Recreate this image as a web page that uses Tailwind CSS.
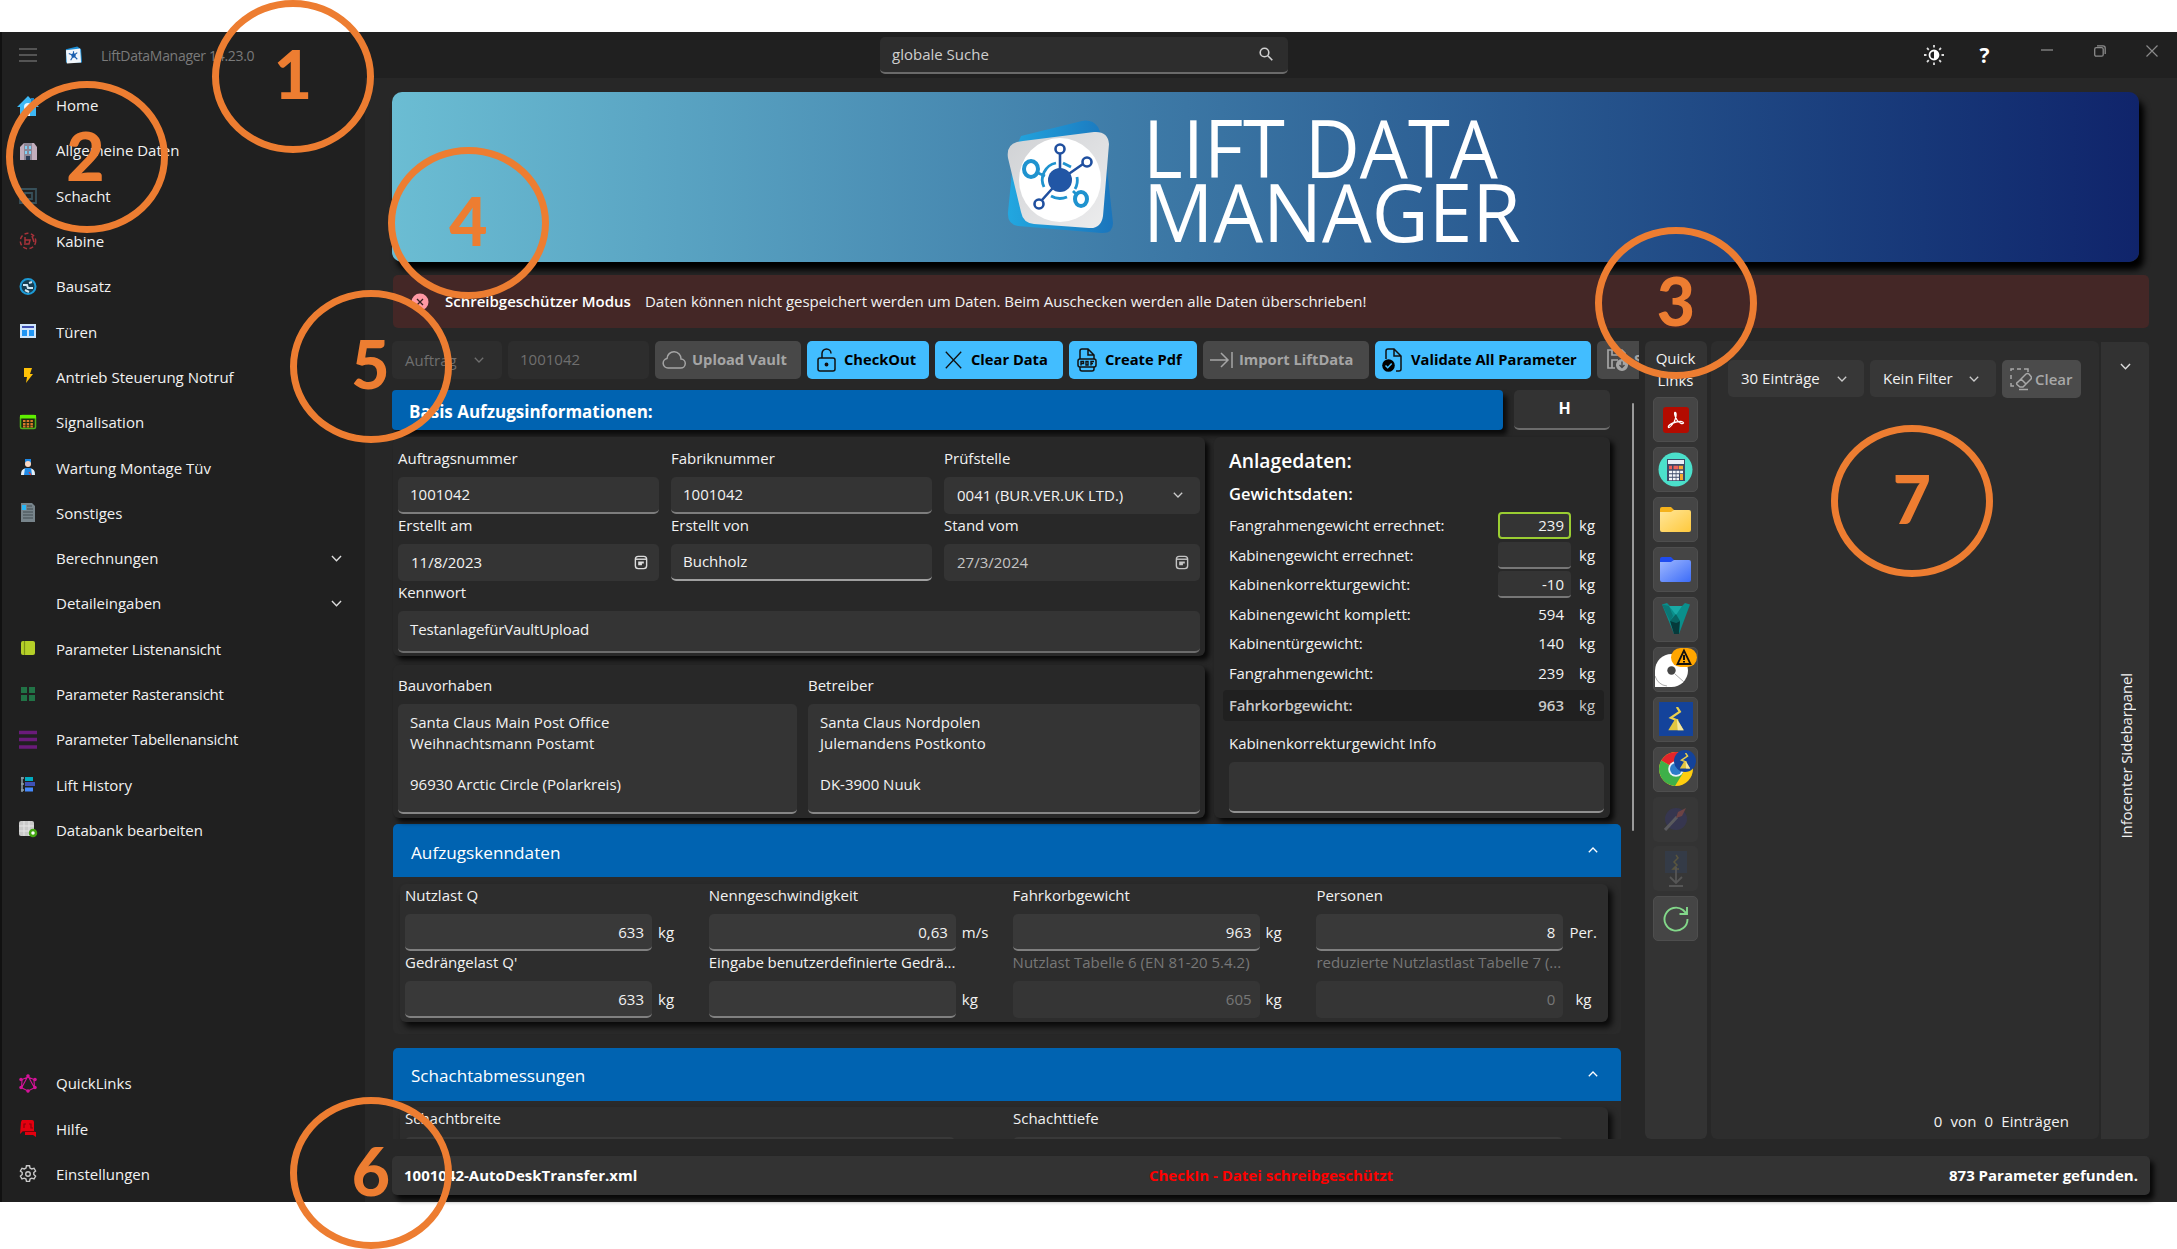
<!DOCTYPE html>
<html lang="de">
<head>
<meta charset="utf-8">
<title>LiftDataManager</title>
<script src="https://cdn.jsdelivr.net/npm/@tailwindcss/browser@4"></script>
</head>
<body class="relative h-[1249px] w-[2177px] overflow-hidden bg-white pt-[32px] font-['Open_Sans',sans-serif] text-[15px] leading-[21px] text-[#f2f2f2]">

<svg class="absolute h-0 w-0">
  <defs>
    <symbol id="down" viewBox="0 0 12 12"><path d="M1.800 3.800 6 8l4.200-4.200" fill="none" stroke="currentColor" stroke-width="1.300"/></symbol>
    <symbol id="up" viewBox="0 0 12 12"><path d="M1.800 8.200 6 4l4.200 4.200" fill="none" stroke="currentColor" stroke-width="1.300"/></symbol>
    <symbol id="cal" viewBox="0 0 14 16"><rect x="1" y="1.500" width="12" height="13" rx="3" fill="none" stroke="currentColor" stroke-width="1.500"/><path d="M1 4.500h12" stroke="currentColor" stroke-width="1.500"/><path d="M4 7h6v2H8v2H4z" fill="currentColor"/></symbol>
    <symbol id="mast" viewBox="0 0 20 28"><path d="M11 0l3.500 5.500L4 12.500l8.500 3.500" fill="none" stroke="#e9cf4e" stroke-width="2.600"/><path d="M9 14h2.500L19 27H1z" fill="#e3c640"/><path d="M11 14l8 13h-7z" fill="#f6e8a0"/></symbol>
    <linearGradient id="fy" x1="0" y1="0" x2="1" y2="1"><stop stop-color="#ffe69a"/><stop offset="1" stop-color="#ffc93c"/></linearGradient>
    <linearGradient id="fb" x1="0" y1="0" x2="1" y2="1"><stop stop-color="#9fb8ff"/><stop offset="1" stop-color="#3c6cf8"/></linearGradient>
    <linearGradient id="lb" x1="0" y1="0" x2="1" y2="0"><stop stop-color="#22a7e0"/><stop offset="1" stop-color="#1b75bc"/></linearGradient>
    <linearGradient id="lw" x1="0" y1="0" x2="1" y2="1"><stop stop-color="#cfd1d4"/><stop offset="1" stop-color="#ededee"/></linearGradient>
  </defs>
</svg>

<div class="flex h-[1170px] flex-col border-l-2 border-[#111] bg-[#202020]">
  <!-- Title bar -->
  <header class="flex h-[46px] shrink-0 items-center">
    <svg class="ml-[17px] h-[16px] w-[18px]" viewBox="0 0 18 16"><path d="M0 2h18M0 8h18M0 14h18" stroke="#666" stroke-width="1.500"/></svg>
    <svg class="ml-[28px] h-[18px] w-[17px]" viewBox="0 0 18 18"><path d="M1 3 13 0l4 3 1 14H1z" fill="#1f8fd6"/><path d="M1 4 16 2l1 15-15 1z" fill="#f2f6fa"/><g stroke="#1c5fae" stroke-width="1.200"><path d="M9 9.500V5M9 9.500l4-3M9 9.500 4 7.500M9 9.500l-3 5M9 9.500l4 4"/></g><circle cx="9" cy="9.500" r="2.300" fill="#1c5fae"/></svg>
    <span class="ml-[19px] w-[151px] whitespace-nowrap text-[14px] tracking-[-0.300px] text-[#7a7a7a]">LiftDataManager 14.23.0</span>
    <div class="ml-[628px] flex h-[37px] w-[408px] items-center justify-between rounded-[5px] border-b-2 border-[#6a6a6a] bg-[#2d2d2d] pr-[15px] pl-[12px] text-[#cfcfcf]">
      <span>globale Suche</span>
      <svg class="h-[14px] w-[14px]" viewBox="0 0 14 14" fill="none" stroke="#d0d0d0" stroke-width="1.600"><circle cx="5.500" cy="5.500" r="4.300"/><path d="m8.800 8.800 4.500 4.500"/></svg>
    </div>
    <svg class="ml-[636px] h-[20px] w-[20px]" viewBox="0 0 20 20"><circle cx="10" cy="10" r="4.500" fill="none" stroke="#fff" stroke-width="1.800"/><path d="M10 5.500a4.500 4.500 0 0 1 0 9z" fill="#fff"/><path d="M10 0v2.500M10 17.500V20M0 10h2.500M17.500 10H20M3 3l1.800 1.800M15.200 15.200 17 17M3 17l1.800-1.800M15.200 4.800 17 3" stroke="#ddd" stroke-width="1.800"/></svg>
    <span class="ml-[32px] w-[17px] text-center text-[21px] font-bold text-white">?</span>
    <svg class="mb-[11px] ml-[48px] h-[12px] w-[12px]" viewBox="0 0 12 12"><path d="M0 6h12" stroke="#8a8a8a" stroke-width="1.300"/></svg>
    <svg class="mb-[9px] ml-[41px] h-[12px] w-[12px]" viewBox="0 0 12 12" fill="none" stroke="#8a8a8a" stroke-width="1.300"><rect x="0.700" y="2.700" width="8.500" height="8.500" rx="1.500"/><path d="M3 .8h6a2.200 2.200 0 0 1 2.200 2.200v6"/></svg>
    <svg class="mb-[9px] ml-[40px] h-[12px] w-[12px]" viewBox="0 0 12 12"><path d="m.5.5 11 11m0-11-11 11" stroke="#8a8a8a" stroke-width="1.200"/></svg>
  </header>

  <div class="flex min-h-0 flex-1">
    <!-- Navigation -->
    <nav class="flex w-[363px] shrink-0 flex-col pt-[5px] pl-[15px] text-[15px]">
      <div class="flex h-[45.300px] items-center gap-[17px]"><svg class="h-[22px] w-[22px]" viewBox="0 0 22 22"><path d="M11 1 0 12h3v9h16v-9h3z" fill="#3db8f5"/><path d="M14 3h3v4h-3z" fill="#1c84c6"/><circle cx="11" cy="12" r="4" fill="#e8f6ff"/><path d="M9 17h4v4H9z" fill="#e8f6ff"/></svg><span>Home</span></div>
      <div class="flex h-[45.300px] items-center gap-[17px]"><svg class="h-[22px] w-[22px]" viewBox="0 0 22 22"><path d="M3 7 7 3h10l3 4v13H3z" fill="#c3aebd"/><path d="M7 3h8v17H7z" fill="#8d8797"/><path d="M8 6h2v3H8zm4 0h2v3h-2zm-4 5h2v3H8zm4 0h2v3h-2z" fill="#7fd0f5"/><path d="M9 16h4v4H9z" fill="#2b3b55"/></svg><span>Allgemeine Daten</span></div>
      <div class="flex h-[45.300px] items-center gap-[17px]"><svg class="h-[22px] w-[22px]" viewBox="0 0 22 22" fill="none" stroke="#37505a" stroke-width="1.800"><path d="M3 8V4h16v14H3v-4M8 8h7v6H8zM3 11h5"/></svg><span>Schacht</span></div>
      <div class="flex h-[45.300px] items-center gap-[17px]"><svg class="h-[22px] w-[22px]" viewBox="0 0 22 22" fill="none" stroke="#a8323a" stroke-width="1.500"><circle cx="11" cy="10" r="7.700" stroke-dasharray="4 2.500"/><path d="M8 6v8M8 9h5l-1 4H9M15 5l2 6"/></svg><span>Kabine</span></div>
      <div class="flex h-[45.300px] items-center gap-[17px]"><svg class="h-[22px] w-[22px]" viewBox="0 0 22 22"><circle cx="11" cy="10.500" r="7.500" fill="#173e52" stroke="#1c9ad6" stroke-width="2"/><path d="M6 9h4l1 3h5M12 7l3-1M8 14l4 2" stroke="#cfe6f2" stroke-width="2" fill="none"/></svg><span>Bausatz</span></div>
      <div class="flex h-[45.300px] items-center gap-[17px]"><svg class="h-[22px] w-[22px]" viewBox="0 0 22 22"><path d="M3 3h16v14H3z" fill="#cfe6fb"/><path d="M5 5h12v2H5z" fill="#3f51b5"/><path d="M5 9h5v6H5zm7 0h5v6h-5z" fill="#2196f3"/></svg><span>Türen</span></div>
      <div class="flex h-[45.300px] items-center gap-[17px]"><svg class="h-[22px] w-[22px]" viewBox="0 0 22 22"><path d="M7 2h8l-2 6h3L9 17l1-6H7z" fill="#ffc107"/></svg><span>Antrieb Steuerung Notruf</span></div>
      <div class="flex h-[45.300px] items-center gap-[17px]"><svg class="h-[22px] w-[22px]" viewBox="0 0 22 22"><rect x="3.500" y="3.500" width="15" height="13" rx="1.500" fill="#1f2a10" stroke="#4faf1b" stroke-width="1.500"/><path d="M3 3h16v3.500H3z" fill="#5ff000"/><path d="M6 9h10M6 12h10M6 14.500h10" stroke="#d9782a" stroke-width="1.800" stroke-dasharray="2.500 1.200"/></svg><span>Signalisation</span></div>
      <div class="flex h-[45.300px] items-center gap-[17px]"><svg class="h-[22px] w-[22px]" viewBox="0 0 22 22"><path d="M8 2h6v4H8z" fill="#1e88e5"/><circle cx="11" cy="7" r="3" fill="#fbd9c4"/><path d="M4 18c0-5 2-7 7-7s7 2 7 7z" fill="#e3eef7"/><path d="M8 11h6l1 7H7z" fill="#1e88e5"/><path d="m12 15 2 3" stroke="#e53935" stroke-width="1.200"/></svg><span>Wartung Montage Tüv</span></div>
      <div class="flex h-[45.300px] items-center gap-[17px]"><svg class="h-[22px] w-[22px]" viewBox="0 0 22 22"><path d="M4 1h11l3 3v16H4z" fill="#77848b"/><path d="M5 3h4v5H5z" fill="#29b6f6"/><path d="M10 4h5M10 7h6M6 10h10M6 13h10M6 16h10" stroke="#424c52" stroke-width="1.200"/></svg><span>Sonstiges</span></div>
      <div class="flex h-[45.300px] items-center pr-[22px] pl-[39px]"><span class="flex-1">Berechnungen</span><svg class="h-[13px] w-[13px] text-[#ddd]"><use href="#down"/></svg></div>
      <div class="flex h-[45.300px] items-center pr-[22px] pl-[39px]"><span class="flex-1">Detaileingaben</span><svg class="h-[13px] w-[13px] text-[#ddd]"><use href="#down"/></svg></div>
      <div class="flex h-[45.300px] items-center gap-[17px]"><svg class="h-[22px] w-[22px]" viewBox="0 0 22 22"><rect x="4" y="3" width="14" height="14" rx="2" fill="#b5cf28"/><path d="M7.500 3v14" stroke="#7d9316" stroke-width="1.200"/></svg><span class="tracking-[-0.220px]">Parameter Listenansicht</span></div>
      <div class="flex h-[45.300px] items-center gap-[17px]"><svg class="h-[22px] w-[22px]" viewBox="0 0 22 22"><path d="M4 3h6v6H4zm8 0h6v6h-6zM4 11h6v6H4zm8 0h6v6h-6z" fill="#217346"/></svg><span class="tracking-[-0.220px]">Parameter Rasteransicht</span></div>
      <div class="flex h-[45.300px] items-center gap-[17px]"><svg class="h-[22px] w-[22px]" viewBox="0 0 22 22"><path d="M2 3.500h18M2 10.500h18M2 18h18" stroke="#6a1b7a" stroke-width="3.500"/></svg><span class="tracking-[-0.220px]">Parameter Tabellenansicht</span></div>
      <div class="flex h-[45.300px] items-center gap-[17px]"><svg class="h-[22px] w-[22px]" viewBox="0 0 22 22"><path d="M5 3v15M4 4h3M4 10h3M4 16h3" stroke="#8da0aa" stroke-width="1.500" fill="none"/><path d="M8 3h8v4H8z" fill="#00acc1"/><path d="M8 8h10v4H8z" fill="#3f51b5"/><path d="M8 13.500h8v4H8z" fill="#448aff"/></svg><span>Lift History</span></div>
      <div class="flex h-[45.300px] items-center gap-[17px]"><svg class="h-[22px] w-[22px]" viewBox="0 0 22 22"><rect x="2" y="2" width="15" height="15" rx="2" fill="#c9c9c9"/><path d="M2 7h15M2 12h15M7 2v15M12 2v15" stroke="#e6e6e6"/><circle cx="16" cy="14" r="3" fill="#fff" stroke="#43a512" stroke-width="2.500"/></svg><span class="tracking-[-0.050px]">Databank bearbeiten</span></div>
      <div class="mt-auto flex h-[45.300px] items-center gap-[17px]"><svg class="h-[22px] w-[22px]" viewBox="0 0 22 22" fill="none" stroke="#d6139a" stroke-width="1.100"><path d="M11 3 5 14M11 3l6 11M5 7l-.5 8M17 7l.5 8M5 6.500 11 4l6 2.500M5 15l6 3 6-3"/><g fill="#d6139a"><circle cx="11" cy="3" r="1.200"/><circle cx="4" cy="6.500" r="1.200"/><circle cx="18" cy="6.500" r="1.200"/><circle cx="4" cy="14.500" r="1.200"/><circle cx="18" cy="14.500" r="1.200"/><circle cx="11" cy="18" r="1.200"/></g></svg><span>QuickLinks</span></div>
      <div class="flex h-[45.300px] items-center gap-[17px]"><svg class="h-[22px] w-[22px]" viewBox="0 0 22 22"><path d="M5 2h10q2 0 2 2v9H6l-3 3 1-12z" fill="#e3000f"/><path d="M8 14h11v5l-3-2H8z" fill="#e3000f"/><path d="M7 10V6h2M12 6h2v4h2" stroke="#8c000a" stroke-width="1.200" fill="none"/><path d="M6 13.500h12" stroke="#7c0008"/></svg><span>Hilfe</span></div>
      <div class="mb-[5px] flex h-[45.300px] items-center gap-[17px]"><svg class="h-[22px] w-[22px]" viewBox="0 0 24 24" fill="none" stroke="#c8c8c8" stroke-width="1.500"><circle cx="12" cy="12" r="2.500"/><path d="M9.800 5.500 10.300 3h3.400l.5 2.500 1.800 1 2.600-.8 1.700 3-2 1.700v2.200l2 1.700-1.700 3-2.600-.8-1.800 1-.5 2.500h-3.400l-.5-2.500-1.800-1-2.600.8-1.700-3 2-1.700v-2.200l-2-1.700 1.700-3 2.600.8z"/></svg><span>Einstellungen</span></div>
    </nav>

    <!-- Page -->
    <main class="flex min-w-0 flex-1 flex-col bg-[#272727] pt-[14px] pl-[27px]">
      <div class="flex h-[170px] w-[1747px] shrink-0 items-start rounded-[10px] bg-linear-to-r from-[#6bbdd3] to-[#10246b] shadow-[5px_8px_6px_#000]">
        <svg class="mt-[28px] ml-[614px] h-[114px] w-[108px]" viewBox="0 0 108 114">
          <path d="M15 16 76 1q10-2 16 6l6 14 9 82q0 11-12 10L12 106Q1 104 2 92l6-60z" fill="url(#lb)"/>
          <path d="M17 21 88 12q14-1 15 12L97 96q-2 13-14 12L28 104q-11-1-13-12L2 38q-2-13 9-16z" fill="url(#lw)"/>
          <ellipse cx="54" cy="60" rx="41" ry="42" fill="#fff"/>
          <g fill="none" stroke="#1f93cf" stroke-width="2.800"><path d="M50 43a17 17 0 0 0-12 24M57 43l8 4M71 57a17 17 0 0 1-2 12M61 77a18 18 0 0 1-16-1M32 53l7 3M67 71l4 4"/><ellipse cx="25" cy="49" rx="7" ry="8" stroke-width="4"/><ellipse cx="75" cy="79" rx="6" ry="7" stroke-width="4"/></g>
          <g fill="none" stroke="#1f4f9f" stroke-width="2.600"><path d="M54 60V34M54 60l23-16M54 60 36 80"/><circle cx="54" cy="29" r="4.500"/><circle cx="81" cy="42" r="4.500"/><circle cx="33" cy="84" r="4.500"/></g>
          <circle cx="54" cy="60" r="12" fill="#2156a5"/>
        </svg>
        <div class="mt-[23px] ml-[29px] text-[80px] leading-[63.500px] whitespace-nowrap text-white"><div class="origin-left scale-x-[0.95]">LIFT DATA</div><div class="origin-left scale-x-[0.98]">MANAGER</div></div>
      </div>

      <div class="mt-[13px] ml-px flex h-[53px] w-[1756px] shrink-0 items-center rounded-[5px] bg-[#442726]">
        <svg class="ml-[18px] h-[18px] w-[18px]" viewBox="0 0 18 18"><circle cx="9" cy="9" r="8.500" fill="#ff99a4"/><path d="m6 6 6 6m0-6-6 6" stroke="#33201f" stroke-width="1.300"/></svg>
        <span class="ml-[16px] w-[200px] font-semibold whitespace-nowrap text-white">Schreibgeschützer Modus</span>
        <span class="tracking-[-0.030px] whitespace-nowrap">Daten können nicht gespeichert werden um Daten. Beim Auschecken werden alle Daten überschrieben!</span>
      </div>

      <div class="mt-[13px] flex h-[798px] shrink-0">
        <!-- Form column -->
        <section class="w-[1247px] shrink-0 overflow-hidden">
          <div class="flex h-[38px] w-[1400px] gap-[6px] text-[14.700px] font-bold">
            <div class="flex w-[110px] shrink-0 items-center justify-between rounded-[5px] bg-[#2d2d2d] pr-[17px] pl-[13px] text-[15px] font-normal text-[#6f6f6f]"><span>Auftrag</span><svg class="h-[12px] w-[12px]"><use href="#down"/></svg></div>
            <div class="flex w-[141px] shrink-0 items-center rounded-[5px] bg-[#2d2d2d] pb-px pl-[12px] text-[15px] font-normal text-[#6f6f6f]">1001042</div>
            <div class="flex w-[146px] shrink-0 items-center gap-[6px] rounded-[5px] bg-[#484848] pb-px pl-[7px] whitespace-nowrap text-[#a5a5a5]"><svg class="h-[20px] w-[24px]" viewBox="0 0 24 20"><path d="M6 18h12.500a4.500 4.500 0 0 0 .5-9 7 7 0 0 0-14-.5A4.800 4.800 0 0 0 6 18z" fill="none" stroke="#a5a5a5" stroke-width="1.500"/></svg>Upload Vault</div>
            <div class="flex w-[122px] shrink-0 items-center gap-[8px] rounded-[5px] bg-[#42bdff] pb-px pl-[10px] whitespace-nowrap text-black"><svg class="h-[24px] w-[19px]" viewBox="0 0 19 24" fill="none" stroke="#111" stroke-width="1.500"><rect x="1" y="10" width="17" height="13" rx="2"/><path d="M5 10V5.500a4.500 4.500 0 0 1 9 0"/><circle cx="9.500" cy="16.500" r="1.200" fill="#111"/></svg>CheckOut</div>
            <div class="flex w-[128px] shrink-0 items-center gap-[9px] rounded-[5px] bg-[#42bdff] pb-px pl-[10px] whitespace-nowrap text-black"><svg class="h-[18px] w-[17px]" viewBox="0 0 17 18"><path d="m.8.800 15.400 16.400m0-16.400L.8 17.200" stroke="#111" stroke-width="1.300"/></svg>Clear Data</div>
            <div class="flex w-[128px] shrink-0 items-center gap-[8px] rounded-[5px] bg-[#42bdff] pb-px pl-[8px] whitespace-nowrap text-black"><svg class="h-[24px] w-[20px]" viewBox="0 0 20 24" fill="none" stroke="#111" stroke-width="1.500"><path d="M3 11V3q0-2 2-2h6l6 6v4M11 1v6h6M3 19v2q0 2 2 2h10q2 0 2-2v-2"/><rect x="1" y="11" width="18" height="8" rx="2"/><path d="M4 17.500v-4h2.500v2H4M9 13.500v3.500h2v-3.500zM14 17.500v-4h3M14 15.500h2" stroke-width="1.400"/></svg>Create Pdf</div>
            <div class="flex w-[166px] shrink-0 items-center gap-[6px] rounded-[5px] bg-[#484848] pb-px pl-[7px] whitespace-nowrap text-[#a5a5a5]"><svg class="h-[18px] w-[23px]" viewBox="0 0 23 18" fill="none" stroke="#a5a5a5" stroke-width="1.500"><path d="M0 9h18M11 2l7 7-7 7M22 1v16"/></svg>Import LiftData</div>
            <div class="flex w-[216px] shrink-0 items-center gap-[9px] rounded-[5px] bg-[#42bdff] pb-px pl-[7px] whitespace-nowrap text-black"><svg class="h-[24px] w-[20px]" viewBox="0 0 20 24"><path d="M4 11V3q0-2 2-2h6l7 7v13q0 2-2 2h-3M12 1v7h7" fill="none" stroke="#111" stroke-width="1.500"/><circle cx="6.500" cy="17.500" r="6.300" fill="#000"/><path d="m3.500 17.500 2.200 2.200 4-4.200" fill="none" stroke="#42bdff" stroke-width="1.500"/></svg>Validate All Parameter</div>
            <div class="flex w-[90px] shrink-0 items-center gap-[6px] rounded-[5px] bg-[#484848] pb-px pl-[9px] whitespace-nowrap text-[#a5a5a5]"><svg class="h-[24px] w-[22px]" viewBox="0 0 22 24" fill="none" stroke="#a5a5a5" stroke-width="1.700"><path d="M9 20H2V2h14l3 3v5M6 2v5h8V2M6 20v-8h6"/><circle cx="16" cy="17" r="5.200" fill="#a5a5a5"/><path d="M16 13.500v6M13.500 17l2.500 2.500 2.500-2.500" stroke="#484848" stroke-width="1.400"/></svg>Save</div>
          </div>

          <div class="mt-[11px] flex">
            <div class="w-[1229px] shrink-0">
              <div class="flex gap-[11px]">
                <div class="flex h-[40px] w-[1111px] items-center rounded-[4px] bg-[#0063b1] pt-[3px] pl-[17px] text-[17px] font-bold text-white shadow-[4px_5px_5px_#000b]">Basis Aufzugsinformationen:</div>
                <div class="flex h-[40px] w-[96px] items-center justify-center rounded-[5px] border-b-2 border-[#6c6c6c] bg-[#333] pb-[2px] pl-[5px] text-[16px] font-bold text-white">H</div>
              </div>

              <div class="mt-[7px] flex gap-[9px] pl-px">
                <div class="w-[812px]">
                  <div class="h-[219px] rounded-[6px] bg-[#282828] px-[5px] pt-[9.500px] shadow-[4px_4px_5px_#000c]">
                    <div class="grid grid-cols-[261px_261px_256px] gap-x-[12px]">
                      <div><div class="mb-[6px] h-[24px] leading-[22px]">Auftragsnummer</div><div class="flex h-[37px] items-center rounded-[5px] border-b-2 border-[#7d7d7d] bg-[#343434] pl-[12px]">1001042</div></div>
                      <div><div class="mb-[6px] h-[24px] leading-[22px]">Fabriknummer</div><div class="flex h-[37px] items-center rounded-[5px] border-b-2 border-[#7d7d7d] bg-[#343434] pl-[12px]">1001042</div></div>
                      <div><div class="mb-[6px] h-[24px] leading-[22px]">Prüfstelle</div><div class="flex h-[37px] items-center justify-between rounded-[5px] bg-[#343434] pr-[16px] pl-[13px]"><span>0041 (BUR.VER.UK LTD.)</span><svg class="h-[12px] w-[12px] text-[#ccc]"><use href="#down"/></svg></div></div>
                      <div><div class="mb-[6px] h-[24px] leading-[22px]">Erstellt am</div><div class="flex h-[37px] items-center justify-between rounded-[5px] bg-[#343434] pr-[11px] pl-[13px]"><span>11/8/2023</span><svg class="h-[15px] w-[14px] text-[#ddd]"><use href="#cal"/></svg></div></div>
                      <div><div class="mb-[6px] h-[24px] leading-[22px]">Erstellt von</div><div class="flex h-[37px] items-center rounded-[5px] border-b-2 border-[#a0a0a0] bg-[#343434] pl-[12px]">Buchholz</div></div>
                      <div><div class="mb-[6px] h-[24px] leading-[22px]">Stand vom</div><div class="flex h-[37px] items-center justify-between rounded-[5px] bg-[#343434] pr-[11px] pl-[13px] text-[#c4c4c4]"><span>27/3/2024</span><svg class="h-[15px] w-[14px]"><use href="#cal"/></svg></div></div>
                      <div class="col-span-3"><div class="mb-[6px] h-[24px] leading-[22px]">Kennwort</div><div class="flex h-[42px] items-center rounded-[5px] border-b-2 border-[#6c6c6c] bg-[#343434] pb-[3px] pl-[12px] tracking-[-0.120px]">TestanlagefürVaultUpload</div></div>
                    </div>
                  </div>
                  <div class="mt-[9px] grid h-[153px] grid-cols-[399px_392px] gap-x-[11px] rounded-[6px] bg-[#282828] px-[5px] pt-[9px] shadow-[4px_4px_5px_#000c]">
                    <div><div class="mb-[6px] h-[24px] leading-[22px]">Bauvorhaben</div><div class="h-[110px] rounded-[5px] border-b-2 border-[#868686] bg-[#343434] pt-[8px] pl-[12px] leading-[20.800px]">Santa Claus Main Post Office<br>Weihnachtsmann Postamt<br><br>96930 Arctic Circle (Polarkreis)</div></div>
                    <div><div class="mb-[6px] h-[24px] leading-[22px]">Betreiber</div><div class="h-[110px] rounded-[5px] border-b-2 border-[#868686] bg-[#343434] pt-[8px] pl-[12px] leading-[20.800px]">Santa Claus Nordpolen<br>Julemandens Postkonto<br><br>DK-3900 Nuuk</div></div>
                  </div>
                </div>

                <div class="h-[381px] w-[396px] rounded-[6px] bg-[#282828] pt-[7px] pr-[6px] pl-[15px] shadow-[4px_4px_5px_#000c]">
                  <div class="h-[34px] text-[19.300px] leading-[34px] font-semibold text-white">Anlagedaten:</div>
                  <div class="h-[33px] text-[16.500px] leading-[31px] font-semibold text-white">Gewichtsdaten:</div>
                  <div class="flex h-[29.500px] items-center"><span class="w-[269px] tracking-[-0.120px]">Fangrahmengewicht errechnet:</span><span class="h-[27px] w-[73px] rounded-[4px] border-2 border-[#9acd32] bg-[#343434] pr-[5px] text-right leading-[23px]">239</span><span class="ml-[8px]">kg</span></div>
                  <div class="flex h-[29.500px] items-center"><span class="w-[269px] tracking-[-0.120px]">Kabinengewicht errechnet:</span><span class="h-[27px] w-[73px] rounded-[4px] border-b-2 border-[#777] bg-[#343434]"></span><span class="ml-[8px]">kg</span></div>
                  <div class="flex h-[29.500px] items-center"><span class="w-[269px]">Kabinenkorrekturgewicht:</span><span class="h-[27px] w-[73px] rounded-[4px] border-b-2 border-[#777] bg-[#343434] pr-[7px] text-right leading-[27px]">-10</span><span class="ml-[8px]">kg</span></div>
                  <div class="flex h-[29.500px] items-center"><span class="w-[269px]">Kabinengewicht komplett:</span><span class="w-[73px] pr-[7px] text-right">594</span><span class="ml-[8px]">kg</span></div>
                  <div class="flex h-[29.500px] items-center"><span class="w-[269px] tracking-[-0.120px]">Kabinentürgewicht:</span><span class="w-[73px] pr-[7px] text-right">140</span><span class="ml-[8px]">kg</span></div>
                  <div class="flex h-[29.500px] items-center"><span class="w-[269px] tracking-[-0.120px]">Fangrahmengewicht:</span><span class="w-[73px] pr-[7px] text-right">239</span><span class="ml-[8px]">kg</span></div>
                  <div class="mt-[2px] -ml-[6px] flex h-[31px] items-center rounded-[4px] bg-[#202020] pb-px pl-[6px] text-[#c9c9c9]"><span class="w-[269px] tracking-[-0.200px] font-semibold">Fahrkorbgewicht:</span><span class="w-[73px] pr-[7px] text-right font-semibold">963</span><span class="ml-[8px]">kg</span></div>
                  <div class="mt-[10px] h-[31px] leading-[24px] tracking-[-0.050px]">Kabinenkorrekturgewicht Info</div>
                  <div class="h-[51px] rounded-[5px] border-b-2 border-[#909090] bg-[#343434]"></div>
                </div>
              </div>

              <div class="mt-[6px] ml-px flex h-[53px] items-center justify-between rounded-t-[5px] bg-[#0063b1] pt-[3px] pr-[22px] pl-[18px] text-[17.200px] text-white"><span>Aufzugskenndaten</span><svg class="mb-[4px] h-[12px] w-[12px]"><use href="#up"/></svg></div>
              <div class="ml-px h-[157px] rounded-b-[5px] bg-[#2a2a2a] pt-[7px] pl-[7px]">
                <div class="grid h-[138px] w-[1208px] grid-cols-[303.800px_303.800px_303.800px_290px] content-start rounded-[6px] bg-[#2d2d2d] pl-[5px] shadow-[4px_5px_6px_#000c]">
                  <div><div class="mb-[6px] h-[24px] leading-[23px]">Nutzlast Q</div><div class="flex items-center"><span class="h-[37px] w-[247px] rounded-[5px] border-b-2 border-[#808080] bg-[#393939] pr-[8px] text-right leading-[36px]">633</span><span class="ml-[6px]">kg</span></div></div>
                  <div><div class="mb-[6px] h-[24px] leading-[23px]">Nenngeschwindigkeit</div><div class="flex items-center"><span class="h-[37px] w-[247px] rounded-[5px] border-b-2 border-[#808080] bg-[#393939] pr-[8px] text-right leading-[36px]">0,63</span><span class="ml-[6px]">m/s</span></div></div>
                  <div><div class="mb-[6px] h-[24px] leading-[23px]">Fahrkorbgewicht</div><div class="flex items-center"><span class="h-[37px] w-[247px] rounded-[5px] border-b-2 border-[#808080] bg-[#393939] pr-[8px] text-right leading-[36px]">963</span><span class="ml-[6px]">kg</span></div></div>
                  <div><div class="mb-[6px] h-[24px] leading-[23px]">Personen</div><div class="flex items-center"><span class="h-[37px] w-[247px] rounded-[5px] border-b-2 border-[#808080] bg-[#393939] pr-[8px] text-right leading-[36px]">8</span><span class="ml-[6px]">Per.</span></div></div>
                  <div><div class="mb-[6px] h-[24px] leading-[23px]">Gedrängelast Q'</div><div class="flex items-center"><span class="h-[37px] w-[247px] rounded-[5px] border-b-2 border-[#808080] bg-[#393939] pr-[8px] text-right leading-[36px]">633</span><span class="ml-[6px]">kg</span></div></div>
                  <div><div class="mb-[6px] h-[24px] leading-[23px] tracking-[-0.060px] whitespace-nowrap">Eingabe benutzerdefinierte Gedrä...</div><div class="flex items-center"><span class="h-[37px] w-[247px] rounded-[5px] border-b-2 border-[#808080] bg-[#393939]"></span><span class="ml-[6px]">kg</span></div></div>
                  <div><div class="mb-[6px] h-[24px] leading-[23px] whitespace-nowrap text-[#777]">Nutzlast Tabelle 6 (EN 81-20 5.4.2)</div><div class="flex items-center"><span class="h-[37px] w-[247px] rounded-[5px] bg-[#353535] pr-[8px] text-right leading-[36px] text-[#777]">605</span><span class="ml-[6px]">kg</span></div></div>
                  <div><div class="mb-[6px] h-[24px] leading-[23px] whitespace-nowrap text-[#777]">reduzierte Nutzlastlast Tabelle 7 (...</div><div class="flex items-center"><span class="h-[37px] w-[247px] rounded-[5px] bg-[#353535] pr-[8px] text-right leading-[36px] text-[#777]">0</span><span class="ml-[12px]">kg</span></div></div>
                </div>
              </div>

              <div class="mt-[14px] ml-px flex h-[53px] items-center justify-between rounded-t-[5px] bg-[#0063b1] pt-[2px] pr-[22px] pl-[18px] text-[17.100px] text-white"><span>Schachtabmessungen</span><svg class="mb-[4px] h-[12px] w-[12px]"><use href="#up"/></svg></div>
              <div class="ml-px h-[157px] bg-[#2a2a2a] pt-[6px] pl-[7px]">
                <div class="grid h-[138px] w-[1208px] grid-cols-[608px_590px] content-start rounded-[6px] bg-[#2d2d2d] pl-[5px] shadow-[4px_5px_6px_#000c]">
                  <div><div class="mb-[6px] h-[24px] leading-[23px]">Schachtbreite</div><div class="h-[37px] w-[550px] rounded-[5px] bg-[#393939]"></div></div>
                  <div><div class="mb-[6px] h-[24px] leading-[23px]">Schachttiefe</div><div class="h-[37px] w-[550px] rounded-[5px] bg-[#393939]"></div></div>
                </div>
              </div>
            </div>
            <div class="mt-[13px] ml-[11px] h-[428px] w-[2px] rounded-full bg-[#9a9a9a]"></div>
          </div>
        </section>

        <!-- Quick links -->
        <aside class="ml-[5.500px] flex w-[62px] shrink-0 flex-col items-center gap-[4.900px] rounded-[6px] bg-[#333] pt-[6px]">
          <div class="h-[45.500px] text-center leading-[22px]">Quick<br>Links</div>
          <div class="flex h-[45px] w-[45px] items-center justify-center rounded-[5px] border border-[#4e4e4e] bg-[#454545]"><svg class="h-[26px] w-[26px]" viewBox="0 0 26 26"><rect width="26" height="26" rx="3" fill="#b30b00"/><path d="M12 5.500c2 0 1 6-1 9.500-2 3-4 6-5.500 5.500-1-2 3.500-4.500 7.500-5.500s7-1 7.500 1c-1 1.500-4.500 0-6.500-3s-3-7.500-2-7.500z" fill="none" stroke="#fff" stroke-width="1.300"/></svg></div>
          <div class="flex h-[45px] w-[45px] items-center justify-center rounded-[5px] border border-[#4e4e4e] bg-[#454545]"><svg class="h-[35px] w-[35px]" viewBox="0 0 35 35"><circle cx="17.500" cy="17.500" r="17" fill="#4be0cb"/><rect x="9" y="7" width="18" height="22" fill="#3d4a68"/><path d="M10 8h16v4H10z" fill="#e8edf5"/><path d="M11 15.500h3M15.500 15.500h5" stroke="#f0615a" stroke-width="3.500"/><path d="M21 15.500h4" stroke="#f7a930" stroke-width="3.500"/><path d="M11 20h14M11 23.500h10M11 27h10" stroke="#f4f6fa" stroke-width="2.600" stroke-dasharray="3 .7"/><path d="M22 22h3v6h-3z" fill="#f7a930"/></svg></div>
          <div class="flex h-[45px] w-[45px] items-center justify-center rounded-[5px] border border-[#4e4e4e] bg-[#454545]"><svg class="h-[26px] w-[31px]" viewBox="0 0 31 26"><path d="M0 2q0-2 2-2h9l3 3v6H0z" fill="#f5b21c"/><path d="M0 5h11l3-2h15q2 0 2 2v18q0 2-2 2H2q-2 0-2-2z" fill="url(#fy)"/></svg></div>
          <div class="flex h-[45px] w-[45px] items-center justify-center rounded-[5px] border border-[#4e4e4e] bg-[#454545]"><svg class="h-[26px] w-[31px]" viewBox="0 0 31 26"><path d="M0 2q0-2 2-2h9l3 3v6H0z" fill="#1f4cf0"/><path d="M0 5h11l3-2h15q2 0 2 2v18q0 2-2 2H2q-2 0-2-2z" fill="url(#fb)"/></svg></div>
          <div class="flex h-[45px] w-[45px] items-center justify-center rounded-[5px] border border-[#4e4e4e] bg-[#454545]"><svg class="h-[32px] w-[30px]" viewBox="0 0 30 32"><path d="M1 1.500 6 0l3 3h12l3-3 5 1.500L18 31h-5z" fill="#0a8f8c"/><path d="M8 3h13l-6 9z" fill="#19aaa6"/><path d="M1 1.500 8 3l4 10-3 5z" fill="#0b7775"/><path d="m15 11-6 7 4 3 2-1 4-2z" fill="#086563"/><path d="m9 18 6 2 4-2-1 13h-5z" fill="#053a3b"/></svg></div>
          <div class="relative flex h-[45px] w-[45px] items-end rounded-[5px] border border-[#4e4e4e] bg-[#454545] pb-[4px] pl-px"><svg class="h-[33px] w-[33px]" viewBox="0 0 33 33"><path d="M0 16.500V33h16.500A16.500 16.500 0 1 0 0 16.500z" fill="#fff"/><path d="m20 20 9 8M0 22q3 9 12 10" stroke="#aaa" fill="none"/><circle cx="16.500" cy="16.500" r="4.200" fill="#454545"/></svg><svg class="absolute top-0 right-0 h-[19px] w-[26px]" viewBox="0 0 26 19"><rect width="26" height="19" rx="9.500" fill="#ffa500"/><path d="M13 2.500 6.500 16h13z" fill="none" stroke="#111" stroke-width="1.800"/><path d="M13 7v5M13 13v1.500" stroke="#111" stroke-width="2"/></svg></div>
          <div class="flex h-[45px] w-[45px] items-center justify-center rounded-[5px] border border-[#4e4e4e] bg-[#454545]"><span class="flex h-[34px] w-[34px] items-center justify-center bg-[#14439b]"><svg class="h-[24px] w-[18px]"><use href="#mast"/></svg></span></div>
          <div class="relative flex h-[45px] w-[45px] items-center justify-center rounded-[5px] border border-[#4e4e4e] bg-[#454545]"><svg class="h-[34px] w-[34px]" viewBox="0 0 34 34"><circle cx="17" cy="17" r="17" fill="#ffce0f"/><path d="M17 17 2.300 8.500A17 17 0 0 1 31.700 8.500z" fill="#e3252b"/><path d="M2.300 8.500A17 17 0 0 0 16 34l8-13-7-4z" fill="#3eb049"/><circle cx="17" cy="17" r="7.800" fill="#e8f0f8"/><circle cx="17" cy="17" r="6" fill="#2c7cc9"/></svg><span class="absolute top-[2px] right-px flex h-[22px] w-[22px] items-center justify-center rounded-full bg-[#14439b]"><svg class="h-[16px] w-[12px]"><use href="#mast"/></svg></span></div>
          <div class="flex h-[45px] w-[45px] items-center justify-center rounded-[5px] bg-[#373737]"><svg class="h-[24px] w-[24px]" viewBox="0 0 24 24"><circle cx="12" cy="12" r="11" fill="#36365a" opacity=".7"/><path d="M1 23 13 10" stroke="#5a5a5e" stroke-width="3"/><path d="m12 11 2-6 8-4-4 8z" fill="#6d4344"/></svg></div>
          <div class="flex h-[45px] w-[45px] items-center justify-center rounded-[5px] bg-[#373737]"><svg class="h-[36px] w-[24px]" viewBox="0 0 24 36"><path d="M1 0h22v22H1z" fill="#343b47"/><path d="m12 4 2 3-4 4 3 3-4 4h6" fill="none" stroke="#59553e" stroke-width="1.500"/><path d="M12 16v16M6 26l6 6 6-6M5 35h14" stroke="#565656" stroke-width="1.800" fill="none"/></svg></div>
          <div class="flex h-[45px] w-[45px] items-center justify-center rounded-[5px] border border-[#4e4e4e] bg-[#454545]"><svg class="h-[26px] w-[26px]" viewBox="0 0 26 26" fill="none" stroke="#83d88a" stroke-width="1.900"><path d="M24.500 13A11.500 11.500 0 1 1 20 4l3.500 3.500M24 1v7h-7.500"/></svg></div>
        </aside>

        <!-- Info center -->
        <section class="ml-[4.500px] flex w-[388px] shrink-0 flex-col rounded-[6px] bg-[#2d2d2d] pt-[19px] pl-[17px]">
          <div class="flex gap-[6px]">
            <div class="flex h-[37px] w-[136px] items-center justify-between rounded-[5px] bg-[#373737] pr-[16px] pl-[13px] font-medium"><span>30 Einträge</span><svg class="h-[12px] w-[12px] text-[#ccc]"><use href="#down"/></svg></div>
            <div class="flex h-[37px] w-[126px] items-center justify-between rounded-[5px] bg-[#373737] pr-[16px] pl-[13px] font-medium"><span>Kein Filter</span><svg class="h-[12px] w-[12px] text-[#ccc]"><use href="#down"/></svg></div>
            <div class="flex h-[38px] w-[79px] items-center gap-[3px] rounded-[5px] bg-[#4b4b4b] pl-[8px] font-semibold text-[#a8a8a8]"><svg class="h-[24px] w-[22px]" viewBox="0 0 22 24" fill="none" stroke="#a8a8a8" stroke-width="1.500"><path d="M1 4V2h3M7 2h4M14 2h4v3M1 8v4M1 16v3h3"/><path d="m8 15 8-8q1.500-1 3 0l2 2.500q1 1.500 0 2.500l-8 8H10l-3-2.500q-1-1.500 1-2.500zM11 12l5 5M9 22.500h9"/></svg>Clear</div>
          </div>
          <div class="mt-auto mr-[30px] mb-[7px] text-right font-medium tracking-[0.100px] whitespace-pre">0  von  0  Einträgen</div>
        </section>
        <aside class="mt-px ml-[2px] flex w-[48px] shrink-0 flex-col items-center rounded-r-[5px] bg-[#323232]">
          <svg class="mt-[18px] h-[13px] w-[13px] text-[#ddd]"><use href="#down"/></svg>
          <div class="mt-[300px] ml-[2px] rotate-180 font-medium tracking-[-0.120px] whitespace-nowrap [writing-mode:vertical-rl]">Infocenter Sidebarpanel</div>
        </aside>
      </div>

      <footer class="mt-[16.500px] flex h-[39.500px] w-[1758px] shrink-0 items-center justify-between rounded-[5px] bg-[#333] pt-px pr-[12px] pl-[12px] font-bold text-white shadow-[4px_5px_5px_#000c]">
        <span class="w-[400px]">1001042-AutoDeskTransfer.xml</span>
        <span class="text-[#f00]">CheckIn - Datei schreibgeschützt</span>
        <span class="w-[400px] text-right">873 Parameter gefunden.</span>
      </footer>
    </main>
  </div>
</div>

<!-- Numbered callouts -->
<div class="absolute top-0 left-[212px] flex h-[153px] w-[162px] items-center justify-center rounded-[50%] border-7 border-[#ed7d31] pb-[5px] font-['Lato',sans-serif] text-[66px] leading-none font-black text-[#ed7d31]">1</div>
<div class="absolute top-[81px] left-[6px] flex h-[152px] w-[162px] items-center justify-center rounded-[50%] border-7 border-[#ed7d31] pr-[3px] pb-[2px] font-['Lato',sans-serif] text-[66px] leading-none font-black text-[#ed7d31]">2</div>
<div class="absolute top-[227px] left-[1595px] flex h-[152px] w-[162px] items-center justify-center rounded-[50%] border-7 border-[#ed7d31] pb-[5px] font-['Lato',sans-serif] text-[66px] leading-none font-black text-[#ed7d31]">3</div>
<div class="absolute top-[147px] left-[388px] flex h-[152px] w-[161px] items-center justify-center rounded-[50%] border-7 border-[#ed7d31] pb-[5px] font-['Lato',sans-serif] text-[66px] leading-none font-black text-[#ed7d31]">4</div>
<div class="absolute top-[290px] left-[290px] flex h-[153px] w-[162px] items-center justify-center rounded-[50%] border-7 border-[#ed7d31] pr-px pb-[5px] font-['Lato',sans-serif] text-[66px] leading-none font-black text-[#ed7d31]">5</div>
<div class="absolute top-[1097px] left-[290px] flex h-[152px] w-[162px] items-center justify-center rounded-[50%] border-7 border-[#ed7d31] pb-[5px] font-['Lato',sans-serif] text-[66px] leading-none font-black text-[#ed7d31]">6</div>
<div class="absolute top-[425px] left-[1831px] flex h-[152px] w-[162px] items-center justify-center rounded-[50%] border-7 border-[#ed7d31] pb-[5px] font-['Lato',sans-serif] text-[66px] leading-none font-black text-[#ed7d31]">7</div>
</body>
</html>
